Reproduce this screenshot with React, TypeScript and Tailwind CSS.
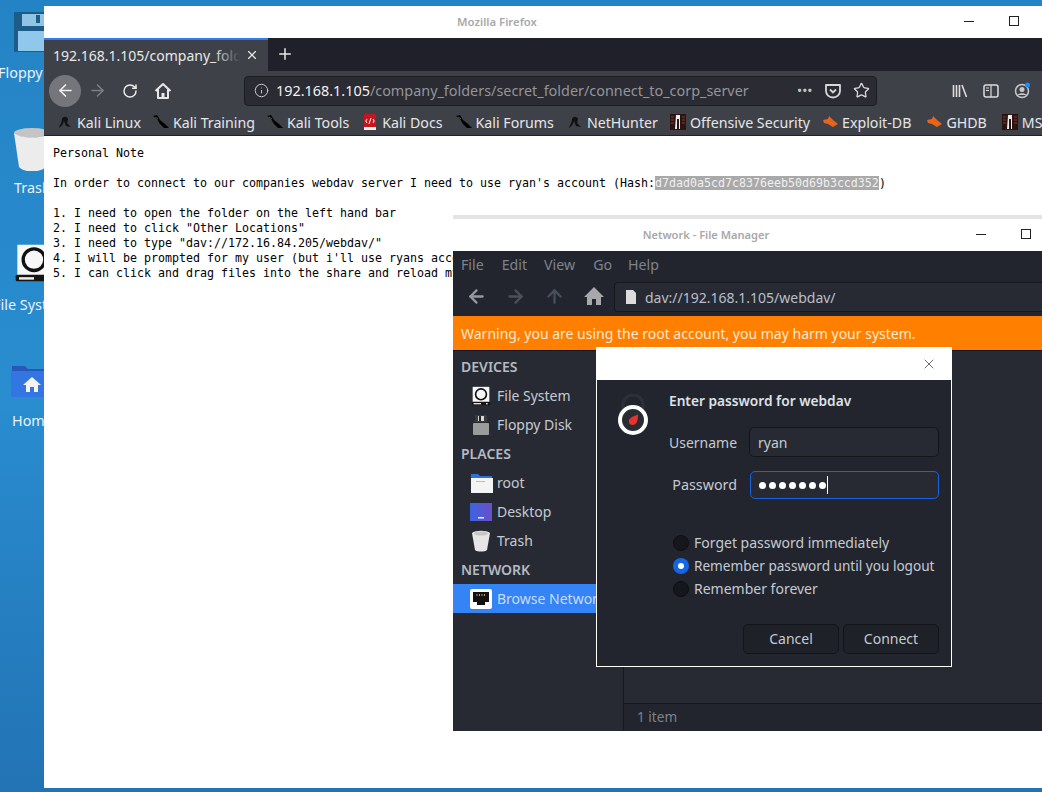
import React from "react";
import { ArrowLeft, ArrowRight, ArrowUp, RotateCw, Info, Star, X, Plus } from "lucide-react";

const ui = "font-['Noto_Sans',sans-serif]";

function KaliIcon() {
  return (
    <svg width="18" height="18" viewBox="0 0 18 18" className="shrink-0">
      <path d="M1 3 L5 2 L8 7 L13 11 L17 15 L12 15 L8 11 L5 6 Z" fill="#000" />
      <path d="M3 4 L6 6" stroke="#555" strokeWidth="1" />
    </svg>
  );
}

function HunterIcon() {
  return (
    <svg width="16" height="16" viewBox="0 0 16 16" className="shrink-0">
      <path d="M2 14 C3 10 5 9 5 5 C6 2 10 2 11 5 L10 9 L14 13 L9 12 L7 7 C6 10 5 12 2 14Z" fill="#111" />
    </svg>
  );
}

function DocsIcon() {
  return (
    <svg width="14" height="16" viewBox="0 0 14 16" className="shrink-0">
      <rect x="1" y="0" width="12" height="16" fill="#c4161c" />
      <rect x="1" y="13" width="12" height="3" fill="#eee" />
      <path d="M4 5 L2.8 7 L4 9 M10 5 L11.2 7 L10 9 M8 4 L6 10" stroke="#fff" strokeWidth="1" fill="none" />
    </svg>
  );
}

function OffsecIcon() {
  return (
    <svg width="16" height="16" viewBox="0 0 16 16" className="shrink-0">
      <rect width="16" height="16" fill="#2a1512" />
      <path d="M6 1 H10 V15 H9 V5 H7 V15 H5 Z" fill="#eee" />
      <path d="M1 3 H4 M1 6 H4 M1 9 H4 M12 3 H15 M12 6 H15 M12 9 H15" stroke="#8a3a2a" strokeWidth="1" />
    </svg>
  );
}

function BugIcon() {
  return (
    <svg width="15" height="12" viewBox="0 0 15 12" className="shrink-0">
      <path d="M0 4 L5 3 L6 0 L10 4 L15 8 L10 11 L5 8 L1 7 Z" fill="#e8641b" />
    </svg>
  );
}

function Bookmark({ icon, label, className = "" }: { icon: React.ReactNode; label: string; className?: string }) {
  return (
    <div className={`flex items-center gap-[3px] shrink-0 ${className}`}>
      <span className="w-[18px] flex justify-center">{icon}</span>
      <span className="text-[14.2px] text-[#e6e6e8] whitespace-nowrap">{label}</span>
    </div>
  );
}

function HomeGlyph({ stroke = "#e8e8ea" }: { stroke?: string }) {
  return (
    <svg width="18" height="18" viewBox="0 0 18 18">
      <path d="M1.5 9 L9 2 L16.5 9 M4 7.5 V16 H14 V7.5" fill="none" stroke={stroke} strokeWidth="2" strokeLinejoin="round" />
      <rect x="7.5" y="11" width="3" height="5" fill={stroke} />
    </svg>
  );
}

function DiskIcon({ size = 24 }: { size?: number }) {
  return (
    <svg width={size} height={size} viewBox="0 0 24 24">
      <path d="M2 1 H22 V20 H2 Z" fill="#f7f7f7" />
      <circle cx="12" cy="10" r="6.5" fill="none" stroke="#111" strokeWidth="2" />
      <rect x="1" y="19" width="22" height="4" rx="1" fill="#151515" />
      <rect x="3" y="20.5" width="9" height="1.5" fill="#eee" />
      <rect x="18" y="20.5" width="2" height="1.5" fill="#eee" />
    </svg>
  );
}

function FloppyIcon() {
  return (
    <svg width="18" height="20" viewBox="0 0 18 20">
      <rect x="1" y="8" width="16" height="12" rx="1" fill="#9b9b9b" />
      <rect x="3" y="0" width="12" height="7" fill="#3a3a3a" />
      <rect x="6" y="1" width="6" height="5" fill="#d8d8d8" />
      <rect x="7" y="1" width="2" height="5" fill="#222" />
    </svg>
  );
}

function RadioOff() {
  return <span className="w-[16px] h-[16px] rounded-full bg-[#15171c] border border-[#0d0e12] shrink-0" />;
}

function RadioOn() {
  return (
    <span className="w-[16px] h-[16px] rounded-full bg-[#1466e6] flex items-center justify-center shrink-0">
      <span className="w-[6px] h-[6px] rounded-full bg-white" />
    </span>
  );
}

function SideRow({ icon, label }: { icon: React.ReactNode; label: string }) {
  return (
    <div className="h-[29px] shrink-0 flex items-center pl-[16px] gap-[4px]">
      <span className="w-[24px] flex justify-center">{icon}</span>
      <span className="text-[14px] text-[#c4cad2] whitespace-nowrap">{label}</span>
    </div>
  );
}

function FirefoxWindow() {
  return (
    <div className="absolute left-[44px] top-[6px] right-0 bottom-[4px] flex flex-col bg-white overflow-hidden">
      <div className="h-[32px] shrink-0 bg-white relative flex items-center justify-center pr-[92px]">
        <span className="text-[11.3px] font-semibold text-[#a8a8a8]">Mozilla Firefox</span>
        <span className="absolute left-[920px] top-[15px] w-[10px] h-px bg-[#222]" />
        <span className="absolute left-[965px] top-[10px] w-[10px] h-[10px] border border-[#222]" />
      </div>
      <div className="h-[33px] shrink-0 bg-[#1f2029] flex">
        <div className="w-[224px] bg-[#3f4148] border-t-[2px] border-[#2f7cf0] flex items-center pl-[9px] relative">
          <span className="text-[14px] text-[#e8e8ea] whitespace-nowrap w-[187px] overflow-hidden">192.168.1.105/company_folders</span>
          <span className="absolute left-[170px] top-0 bottom-0 w-[26px] bg-gradient-to-r from-transparent to-[#3f4148]" />
          <X className="absolute left-[201px] top-[8px] text-[#e8e8ea]" size={14} strokeWidth={2} />
        </div>
        <Plus className="ml-[8px] mt-[7px] text-[#e8e8ea]" size={18} strokeWidth={2} />
      </div>
      <div className="h-[39px] shrink-0 bg-[#3f4148] flex items-center pl-[5px]">
        <span className="w-[32px] h-[32px] rounded-full bg-[#75767b] flex items-center justify-center">
          <ArrowLeft className="text-[#f0f0f2]" size={19} strokeWidth={2} />
        </span>
        <ArrowRight className="ml-[7px] text-[#7d7e84]" size={19} strokeWidth={2} />
        <RotateCw className="ml-[15px] text-[#ececee]" size={16} strokeWidth={2.2} />
        <span className="ml-[16px]"><HomeGlyph /></span>
        <div className="ml-[72px] w-[633px] h-[30px] shrink-0 rounded-[4px] bg-[#2a2b33] border border-[#1c1d23] flex items-center pl-[9px] pr-[6px]">
          <Info className="text-[#c9c9cc]" size={15} strokeWidth={1.6} />
          <span className="ml-[7px] text-[14.4px] text-[#f2f2f4] whitespace-nowrap">192.168.1.105<span className="text-[#94959a]">/company_folders/secret_folder/connect_to_corp_server</span></span>
          <div className="ml-auto flex items-center">
            <span className="text-[#c5c5c8] text-[11px] font-bold tracking-[1px] mr-[12px]">•••</span>
            <svg width="16" height="16" viewBox="0 0 16 16" className="mr-[12px]">
              <path d="M1 2 H15 V8 A7 6.5 0 0 1 1 8 Z" fill="none" stroke="#d8d8da" strokeWidth="1.8" strokeLinejoin="round" />
              <path d="M5 6.5 L8 9.5 L11 6.5" fill="none" stroke="#d8d8da" strokeWidth="1.8" />
            </svg>
            <Star className="text-[#dcdcde]" size={17} strokeWidth={1.8} />
          </div>
        </div>
        <div className="ml-[75px] flex items-center gap-[15px] shrink-0">
          <svg width="16" height="16" viewBox="0 0 16 16">
            <path d="M1.5 2 V14 M4.5 2 V14 M7.5 2 V14 M10 2 L14.5 14" stroke="#dcdcde" strokeWidth="1.6" fill="none" />
          </svg>
          <svg width="16" height="14" viewBox="0 0 16 14">
            <rect x="1" y="1" width="14" height="12" rx="2" fill="none" stroke="#dcdcde" strokeWidth="1.5" />
            <path d="M8 1 V13 M3 4 H6 M3 6.5 H6" stroke="#dcdcde" strokeWidth="1.2" />
          </svg>
          <svg width="17" height="17" viewBox="0 0 17 17">
            <circle cx="8" cy="9" r="6.5" fill="none" stroke="#c8c8ca" strokeWidth="1.5" />
            <circle cx="8" cy="7.5" r="2.5" fill="#c8c8ca" />
            <path d="M3.5 13 C5 10.5 11 10.5 12.5 13" fill="#c8c8ca" />
            <circle cx="13.5" cy="3" r="2.5" fill="#1a8cff" />
          </svg>
        </div>
      </div>
      <div className="h-[26px] shrink-0 bg-[#3f4148] border-b border-[#1f2029] flex items-center pl-[12px] gap-[11px] overflow-hidden">
        <Bookmark icon={<HunterIcon />} label="Kali Linux" />
        <Bookmark icon={<KaliIcon />} label="Kali Training" />
        <Bookmark icon={<KaliIcon />} label="Kali Tools" />
        <Bookmark icon={<DocsIcon />} label="Kali Docs" className="ml-[1px]" />
        <Bookmark icon={<KaliIcon />} label="Kali Forums" className="ml-[1px]" />
        <Bookmark icon={<HunterIcon />} label="NetHunter" className="ml-[1px]" />
        <Bookmark icon={<OffsecIcon />} label="Offensive Security" />
        <Bookmark icon={<BugIcon />} label="Exploit-DB" />
        <Bookmark icon={<BugIcon />} label="GHDB" className="ml-[3px]" />
        <Bookmark icon={<OffsecIcon />} label="MSFU" className="ml-[3px]" />
      </div>
      <pre className="flex-1 pl-[9px] pt-[10px] font-['DejaVu_Sans_Mono',monospace] text-[11.63px] leading-[15px] text-black">
        {"Personal Note\n\nIn order to connect to our companies webdav server I need to use ryan's account (Hash:"}
        <span className="bg-[#a9a9a9] text-[#f0f0f0]">d7dad0a5cd7c8376eeb50d69b3ccd352</span>
        {")\n\n1. I need to open the folder on the left hand bar\n2. I need to click \"Other Locations\"\n3. I need to type \"dav://172.16.84.205/webdav/\"\n4. I will be prompted for my user (but i'll use ryans account) to login\n5. I can click and drag files into the share and reload my browser"}
      </pre>
    </div>
  );
}

function FileManager() {
  return (
    <div className="absolute left-[453px] top-[219px] right-0 h-[512px] flex flex-col bg-[#23252e] shadow-[0_-4px_0_#e4e4e4] overflow-hidden">
      <div className="h-[32px] shrink-0 bg-white relative flex items-center justify-center pr-[83px]">
        <span className="text-[11.1px] font-semibold text-[#a8a8a8]">Network - File Manager</span>
        <span className="absolute left-[523px] top-[15px] w-[10px] h-px bg-[#222]" />
        <span className="absolute left-[568px] top-[10px] w-[10px] h-[10px] border border-[#222]" />
      </div>
      <div className="h-[30px] shrink-0 flex items-center pl-[8px] pb-[3px] text-[14.2px] text-[#7d838d]">
        <span>File</span>
        <span className="ml-[18px]">Edit</span>
        <span className="ml-[17px]">View</span>
        <span className="ml-[18px]">Go</span>
        <span className="ml-[16px]">Help</span>
      </div>
      <div className="h-[35px] shrink-0 flex items-start pl-[13px] pt-[1px]">
        <ArrowLeft className="mt-[4px] text-[#9498a0]" size={21} strokeWidth={2.6} />
        <ArrowRight className="mt-[4px] ml-[18px] text-[#4a4f5c]" size={21} strokeWidth={2.6} />
        <ArrowUp className="mt-[4px] ml-[18px] text-[#4a4f5c]" size={21} strokeWidth={2.6} />
        <svg width="22" height="20" viewBox="0 0 22 20" className="mt-[4px] ml-[18px]">
          <path d="M11 1 L21 11 H18 V19 H13 V13 H9 V19 H4 V11 H1 Z" fill="#a8a8aa" />
        </svg>
        <div className="ml-[9px] flex-1 h-[30px] bg-[#282a33] border border-[#17181e] rounded-l-[4px] border-r-0 flex items-center pl-[10px]">
          <svg width="12" height="14" viewBox="0 0 12 14">
            <path d="M1 0 H8 L11 3 V14 H1 Z" fill="#dcdcdc" />
          </svg>
          <span className="ml-[8px] text-[14px] text-[#b9bfc8]">dav://192.168.1.105/webdav/</span>
        </div>
      </div>
      <div className="h-[35px] shrink-0 bg-[#ff7f00] border-b border-[#14151a] flex items-center pl-[8px] text-[14px] text-[#ffe9d2]">
        Warning, you are using the root account, you may harm your system.
      </div>
      <div className="flex-1 flex min-h-0">
        <div className="w-[171px] shrink-0 bg-[#282a33] border-r border-[#17181e] flex flex-col pt-[1px] overflow-hidden">
          <div className="h-[29px] shrink-0 flex items-center pl-[8px] text-[14px] font-semibold text-[#b4bac3]">DEVICES</div>
          <SideRow icon={<DiskIcon size={20} />} label="File System" />
          <SideRow icon={<FloppyIcon />} label="Floppy Disk" />
          <div className="h-[29px] shrink-0 flex items-center pl-[8px] text-[14px] font-semibold text-[#b4bac3]">PLACES</div>
          <SideRow
            icon={
              <svg width="23" height="20" viewBox="0 0 23 20">
                <path d="M1 3 V1 H8 L10 3 H22 V6 H1 Z" fill="#2f6fdc" />
                <rect x="1" y="5" width="22" height="15" fill="#f4f4f4" />
                <rect x="6" y="8" width="9" height="1" fill="#bbb" />
              </svg>
            }
            label="root"
          />
          <SideRow
            icon={
              <svg width="22" height="18" viewBox="0 0 22 18">
                <defs>
                  <linearGradient id="desk" x1="0" y1="0" x2="1" y2="0">
                    <stop offset="0" stopColor="#3d63e0" />
                    <stop offset="1" stopColor="#6a4fc8" />
                  </linearGradient>
                </defs>
                <rect width="22" height="18" fill="url(#desk)" />
                <rect x="8" y="14" width="6" height="1.5" fill="#eee" />
              </svg>
            }
            label="Desktop"
          />
          <SideRow
            icon={
              <svg width="20" height="22" viewBox="0 0 20 22">
                <path d="M1 3 C4 0 16 0 19 3 L16 20 C14 22 6 22 4 20 Z" fill="#e6e6e6" />
                <ellipse cx="10" cy="3.5" rx="7" ry="2" fill="#c6c6c6" />
              </svg>
            }
            label="Trash"
          />
          <div className="h-[29px] shrink-0 flex items-center pl-[8px] text-[14px] font-semibold text-[#b4bac3]">NETWORK</div>
          <div className="h-[29px] shrink-0 bg-[#3584f6] flex items-center pl-[16px] gap-[4px]">
            <span className="w-[24px] flex justify-center">
              <svg width="22" height="20" viewBox="0 0 22 20">
                <rect width="22" height="20" rx="2" fill="#fff" />
                <path d="M3 3 H19 V13 H15 V16 H7 V13 H3 Z" fill="#111" />
                <path d="M7 5 V7 M9.5 5 V7 M12 5 V7 M14.5 5 V7" stroke="#c9a227" strokeWidth="1" />
              </svg>
            </span>
            <span className="text-[14px] text-[#c9dbf5] whitespace-nowrap">Browse Network</span>
          </div>
        </div>
        <div className="flex-1 flex flex-col">
          <div className="flex-1 bg-[#282a33]" />
          <div className="h-[28px] shrink-0 border-t border-[#17181e] flex items-center pl-[13px] text-[13.6px] text-[#7d838d]">1 item</div>
        </div>
      </div>
    </div>
  );
}

function PasswordDialog() {
  return (
    <div className="absolute left-[596px] top-[347px] w-[356px] h-[320px] border border-white bg-[#23252e] flex flex-col">
      <div className="h-[32px] shrink-0 bg-white relative">
        <X className="absolute left-[324px] top-[8px] text-[#333]" size={16} strokeWidth={1.1} />
      </div>
      <div className="flex-1 relative">
        {/* padlock */}
        <svg width="32" height="44" viewBox="0 0 32 44" className="absolute left-[20px] top-[14px]">
          <path d="M6 16 V11 A10 10 0 0 1 26 11 V16" fill="none" stroke="#2e3038" strokeWidth="3" />
          <circle cx="16" cy="26" r="13" fill="#2a2c34" stroke="#fff" strokeWidth="4" />
          <path d="M21 20.5 C21 25 20.5 31 15.5 31 C12 31 11 27 12.5 25 C14 23 17.5 22 21 20.5 Z" fill="#e8322c" />
        </svg>
        <div className="pl-[72px] pr-[12px] pt-[11px] flex flex-col">
          <div className="text-[13.7px] leading-[20px] font-semibold text-[#dde1e6]">Enter password for webdav</div>
          <div className="mt-[16px] flex items-center h-[30px]">
            <span className="w-[68px] text-[14px] text-[#c4cad2]">Username</span>
            <div className="ml-[12px] flex-1 h-[30px] rounded-[5px] bg-[#282a33] border border-[#14151a] flex items-center pl-[8px] text-[14px] text-[#c4cad2]">ryan</div>
          </div>
          <div className="mt-[14px] flex items-center h-[28px]">
            <span className="w-[68px] text-right text-[14.3px] text-[#c4cad2]">Password</span>
            <div className="ml-[13px] flex-1 h-[28px] rounded-[5px] bg-[#282a33] border border-[#1a62e0] flex items-center pl-[8px]">
              <span className="flex gap-[3px]">
                {[0, 1, 2, 3, 4, 5, 6].map((i) => (
                  <span key={i} className="w-[7px] h-[7px] rounded-full bg-white" />
                ))}
              </span>
              <span className="ml-[1px] w-px h-[18px] bg-white" />
            </div>
          </div>
          <div className="mt-[36px] ml-[4px] flex flex-col gap-[7px] text-[14px] leading-[16px] text-[#c4cad2] whitespace-nowrap">
            <div className="flex items-center gap-[5px]"><RadioOff />Forget password immediately</div>
            <div className="flex items-center gap-[5px]"><RadioOn /><span className="text-[13.6px]">Remember password until you logout</span></div>
            <div className="flex items-center gap-[5px]"><RadioOff />Remember forever</div>
          </div>
          <div className="mt-[27px] flex justify-end gap-[4px]">
            <div className="w-[96px] h-[30px] rounded-[5px] bg-[#1f2129] border border-[#14151a] flex items-center justify-center pb-[1px] text-[14px] text-[#c4cad2]">Cancel</div>
            <div className="w-[96px] h-[30px] rounded-[5px] bg-[#1f2129] border border-[#14151a] flex items-center justify-center pb-[1px] text-[14px] text-[#c4cad2]">Connect</div>
          </div>
        </div>
      </div>
    </div>
  );
}

export default function App() {
  return (
    <div className={`relative w-[1042px] h-[792px] overflow-hidden bg-gradient-to-b from-[#2483c4] via-[#298dd0] to-[#2273b4] ${ui}`}>
      {/* desktop icons */}
      <svg width="32" height="40" viewBox="0 0 32 40" className="absolute left-[14px] top-[12px]">
        <rect width="32" height="40" rx="1" fill="#1d5c88" />
        <rect x="8" y="2" width="24" height="12" fill="#8fc4e4" />
        <rect x="22" y="3" width="4" height="8" fill="#1d5c88" />
        <rect x="4" y="19" width="28" height="20" fill="#8fc8ea" />
      </svg>
      <div className="absolute left-[-2px] top-[62px] text-[14.4px] text-[#e8f2fa] whitespace-nowrap">Floppy Disk</div>
      <svg width="32" height="44" viewBox="0 0 32 44" className="absolute left-[14px] top-[127px]">
        <ellipse cx="18" cy="6" rx="18" ry="5" fill="#c4c4c4" />
        <path d="M0 6 C6 12 30 12 36 6 L32 40 C26 46 10 46 5 40 Z" fill="#ececec" />
      </svg>
      <div className="absolute left-[14px] top-[177px] text-[14.4px] text-[#e8f2fa] whitespace-nowrap">Trash</div>
      <span className="absolute left-[14px] top-[243px]"><DiskIcon size={40} /></span>
      <div className="absolute left-[-7px] top-[294px] text-[14.4px] text-[#e8f2fa] whitespace-nowrap">File System</div>
      <svg width="36" height="32" viewBox="0 0 36 32" className="absolute left-[11px] top-[365px]">
        <path d="M1 5 V1 H14 L17 4 H36 V8 H1 Z" fill="#2758b8" />
        <rect y="6" width="36" height="26" fill="#3375e3" />
        <path d="M21 12 L30 20 H27 V27 H23 V22 H19 V27 H15 V20 H12 Z" fill="#f4f4f4" />
      </svg>
      <div className="absolute left-[12px] top-[410px] text-[14.4px] text-[#e8f2fa] whitespace-nowrap">Home</div>

      <FirefoxWindow />
      <FileManager />
      <PasswordDialog />
    </div>
  );
}
